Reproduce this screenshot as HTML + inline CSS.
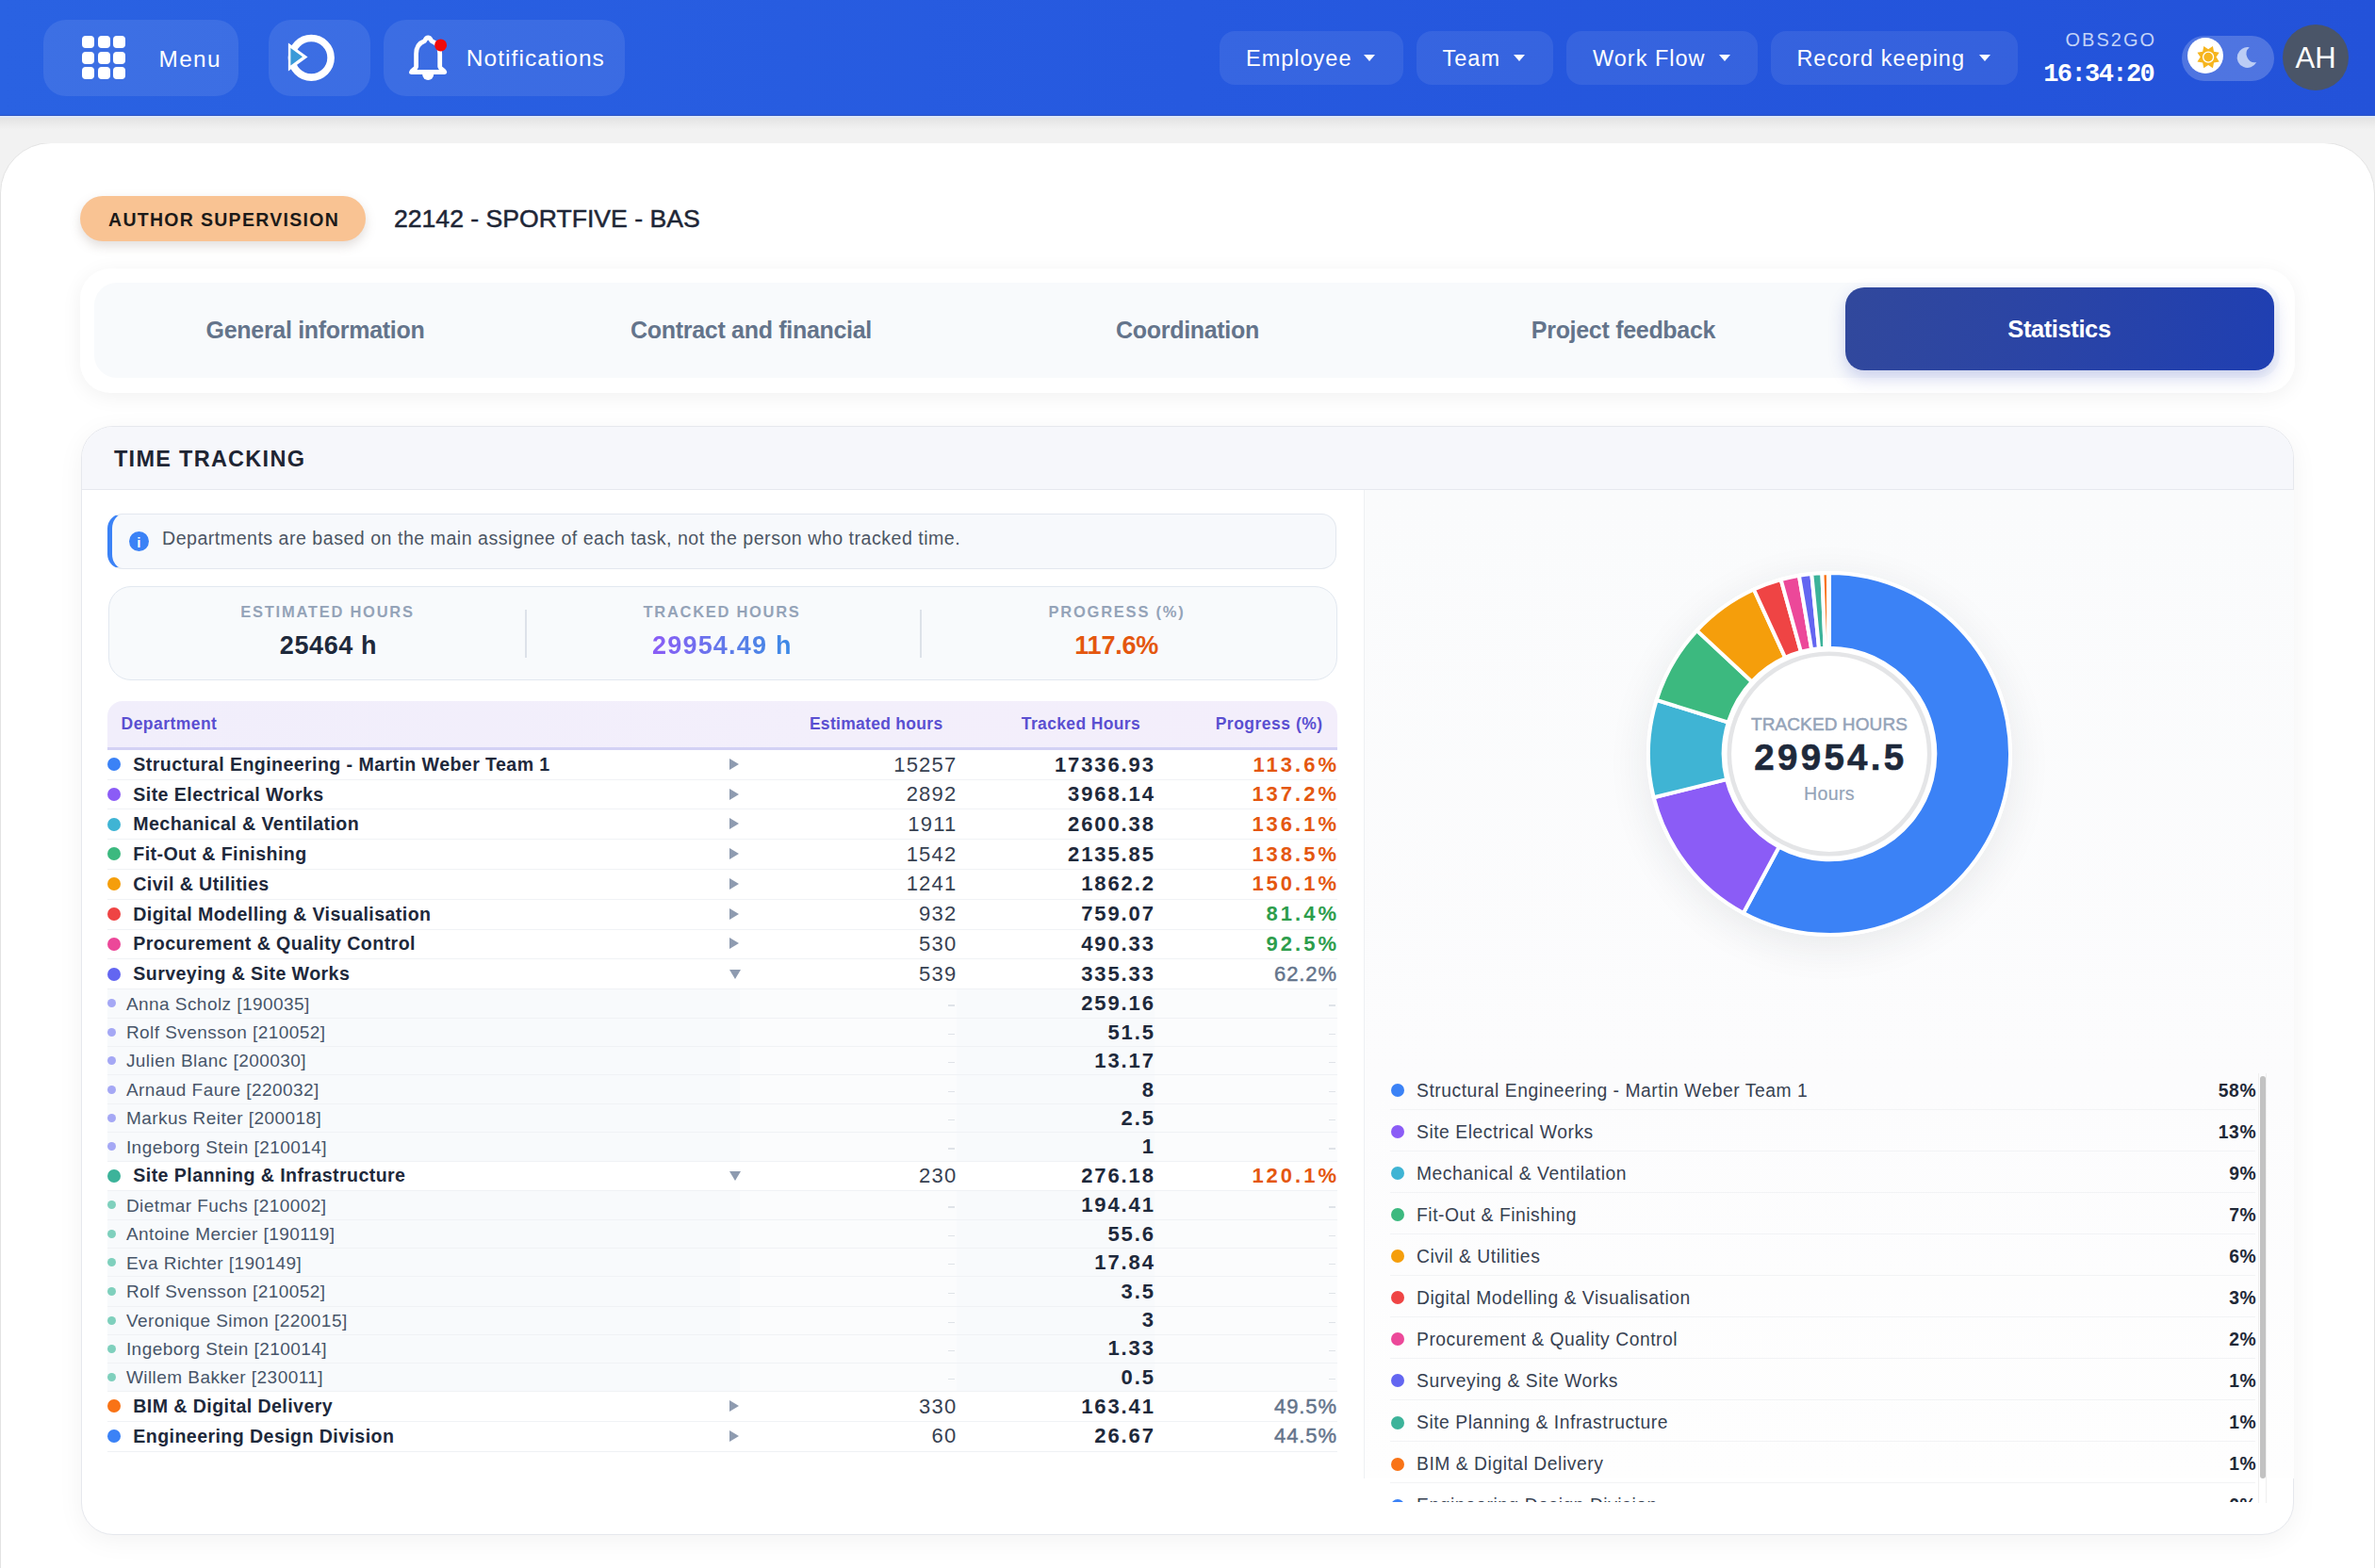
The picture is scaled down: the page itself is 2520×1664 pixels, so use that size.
<!DOCTYPE html><html><head><meta charset="utf-8"><style>
html,body{margin:0;padding:0;width:2520px;height:1664px;overflow:hidden;background:#f2f2f2;font-family:"Liberation Sans",sans-serif;}
.t{position:absolute;white-space:nowrap;}
</style></head><body>
<div style="position:absolute;left:0px;top:151px;width:2520px;height:1600px;background:#fff;border:1px solid #e3e3e3;border-radius:54px;box-sizing:border-box;"></div>
<div style="position:absolute;left:0px;top:124px;width:2520px;height:28px;background:linear-gradient(#e2e2e2,#ececec 30%,#f2f2f2 50%,#f2f2f2);"></div>
<div style="position:absolute;left:0px;top:0px;width:2520px;height:122.5px;background:linear-gradient(90deg,#2a62e2 0%,#2659df 50%,#2352d9 100%);"></div>
<div style="position:absolute;left:0px;top:121.5px;width:2520px;height:1px;background:#2a53c4;"></div>
<div style="position:absolute;left:0px;top:122.5px;width:2520px;height:2px;background:#dde7f8;"></div>
<div style="position:absolute;left:46px;top:21px;width:207px;height:81px;background:rgba(255,255,255,0.09);border-radius:24px;"></div>
<div style="position:absolute;left:285px;top:21px;width:108px;height:81px;background:rgba(255,255,255,0.09);border-radius:24px;"></div>
<div style="position:absolute;left:407px;top:21px;width:256px;height:81px;background:rgba(255,255,255,0.09);border-radius:24px;"></div>
<div style="position:absolute;left:87.0px;top:38.0px;width:13px;height:13px;background:#fff;border-radius:4px;"></div>
<div style="position:absolute;left:87.0px;top:54.6px;width:13px;height:13px;background:#fff;border-radius:4px;"></div>
<div style="position:absolute;left:87.0px;top:71.2px;width:13px;height:13px;background:#fff;border-radius:4px;"></div>
<div style="position:absolute;left:103.6px;top:38.0px;width:13px;height:13px;background:#fff;border-radius:4px;"></div>
<div style="position:absolute;left:103.6px;top:54.6px;width:13px;height:13px;background:#fff;border-radius:4px;"></div>
<div style="position:absolute;left:103.6px;top:71.2px;width:13px;height:13px;background:#fff;border-radius:4px;"></div>
<div style="position:absolute;left:120.2px;top:38.0px;width:13px;height:13px;background:#fff;border-radius:4px;"></div>
<div style="position:absolute;left:120.2px;top:54.6px;width:13px;height:13px;background:#fff;border-radius:4px;"></div>
<div style="position:absolute;left:120.2px;top:71.2px;width:13px;height:13px;background:#fff;border-radius:4px;"></div>
<div class="t" style="left:168.5px;top:50.53px;font-size:24.3px;line-height:24.3px;color:#fff;font-weight:400;letter-spacing:1.4px;font-family:'Liberation Sans', sans-serif;">Menu</div>
<svg style="position:absolute;left:290px;top:25px" width="80" height="75" viewBox="290 25 80 75">
<circle cx="330.3" cy="61.3" r="20.8" fill="none" stroke="#fff" stroke-width="7.6"/>
<path d="M305.9 45.5 L305.9 75.5 L326.5 60.5 Z" fill="#fff"/>
<path d="M308.4 51 L308.4 69.5 L321 60.3 Z" fill="#3a9ad8"/>
</svg>
<svg style="position:absolute;left:425px;top:30px" width="60" height="62" viewBox="425 30 60 62">
<path d="M454.2 40 C452 40 451.5 41.5 450.5 43.5 C445 45.5 441.6 50 441.6 57 L441.6 70.5 C441.6 73 437 74.5 436.5 76.5 L471.8 76.5 C471.4 74.5 466.7 73 466.7 70.5 L466.7 57 C466.7 50 463.4 45.5 457.9 43.5 C456.9 41.5 456.4 40 454.2 40 Z" fill="none" stroke="#fff" stroke-width="4.8" stroke-linejoin="round"/>
<path d="M448.2 79 A6 6 0 0 0 460.2 79 Z" fill="#fff"/>
<circle cx="467.6" cy="47.9" r="6.5" fill="#f00a0a"/>
</svg>
<div class="t" style="left:494.8px;top:50.26px;font-size:24.5px;line-height:24.5px;color:#fff;font-weight:400;letter-spacing:1.05px;font-family:'Liberation Sans', sans-serif;">Notifications</div>
<div style="position:absolute;left:1294.3px;top:33px;width:194.5px;height:56.5px;background:rgba(255,255,255,0.08);border-radius:16px;"></div>
<div class="t" style="left:1322.0px;top:50.61px;font-size:23.5px;line-height:23.5px;color:#fff;font-weight:400;letter-spacing:1.0px;font-family:'Liberation Sans', sans-serif;">Employee</div>
<div style="position:absolute;left:1447.2px;top:58px;width:0;height:0;border-left:6.8px solid transparent;border-right:6.8px solid transparent;border-top:7.2px solid #fff;"></div>
<div style="position:absolute;left:1503px;top:33px;width:144.70000000000005px;height:56.5px;background:rgba(255,255,255,0.08);border-radius:16px;"></div>
<div class="t" style="left:1530.5px;top:50.61px;font-size:23.5px;line-height:23.5px;color:#fff;font-weight:400;letter-spacing:1.0px;font-family:'Liberation Sans', sans-serif;">Team</div>
<div style="position:absolute;left:1606px;top:58px;width:0;height:0;border-left:6.8px solid transparent;border-right:6.8px solid transparent;border-top:7.2px solid #fff;"></div>
<div style="position:absolute;left:1662.2px;top:33px;width:202.5px;height:56.5px;background:rgba(255,255,255,0.08);border-radius:16px;"></div>
<div class="t" style="left:1690.0px;top:50.61px;font-size:23.5px;line-height:23.5px;color:#fff;font-weight:400;letter-spacing:1.0px;font-family:'Liberation Sans', sans-serif;">Work Flow</div>
<div style="position:absolute;left:1823.7px;top:58px;width:0;height:0;border-left:6.8px solid transparent;border-right:6.8px solid transparent;border-top:7.2px solid #fff;"></div>
<div style="position:absolute;left:1879px;top:33px;width:261.5px;height:56.5px;background:rgba(255,255,255,0.08);border-radius:16px;"></div>
<div class="t" style="left:1906.4px;top:50.61px;font-size:23.5px;line-height:23.5px;color:#fff;font-weight:400;letter-spacing:1.0px;font-family:'Liberation Sans', sans-serif;">Record keeping</div>
<div style="position:absolute;left:2099.5px;top:58px;width:0;height:0;border-left:6.8px solid transparent;border-right:6.8px solid transparent;border-top:7.2px solid #fff;"></div>
<div class="t" style="right:232px;top:32.07px;font-size:20px;line-height:20px;color:#c3d3f7;font-weight:400;letter-spacing:2.0px;font-family:'Liberation Sans', sans-serif;">OBS2GO</div>
<div class="t" style="right:236.5px;top:66.44px;font-size:27px;line-height:27px;color:#fff;font-weight:700;letter-spacing:-1.6px;font-family:'Liberation Mono', monospace;margin-right:-1.6px;">16:34:20</div>
<div style="position:absolute;left:2315px;top:37.5px;width:98px;height:48px;background:rgba(255,255,255,0.2);border-radius:24px;"></div>
<div style="position:absolute;left:2320.9px;top:40.4px;width:38px;height:38px;background:#fff;border-radius:50%;"></div>
<svg style="position:absolute;left:2320px;top:38px" width="90" height="46" viewBox="2320 38 90 46">
<polygon points="2347.92,48.96 2349.04,54.66 2354.74,55.78 2351.50,60.60 2354.74,65.42 2349.04,66.54 2347.92,72.24 2343.10,69.00 2338.28,72.24 2337.16,66.54 2331.46,65.42 2334.70,60.60 2331.46,55.78 2337.16,54.66 2338.28,48.96 2343.10,52.20" fill="#f6b51e"/>
<circle cx="2343.1" cy="60.6" r="5.5" fill="#f6b51e" stroke="#fff" stroke-width="1.3"/>
<path d="M2386.79 50.32 A10.9 10.9 0 1 0 2394.26 66.05 A9.0 9.0 0 0 1 2386.79 50.32 Z" fill="#bccdf5"/>
</svg>
<div style="position:absolute;left:2422px;top:26px;width:70px;height:70px;background:#4a5568;border-radius:50%;"></div>
<div class="t" style="left:1457px;width:2000px;text-align:center;top:46.26px;font-size:31px;line-height:31px;color:#fff;font-weight:400;letter-spacing:0px;font-family:'Liberation Sans', sans-serif;">AH</div>
<div style="position:absolute;left:85px;top:208px;width:303px;height:48px;background:#f9c393;border-radius:24px;box-shadow:0 5px 12px rgba(120,100,90,0.22);"></div>
<div class="t" style="left:115px;top:224.29px;font-size:19.5px;line-height:19.5px;color:#1c1a19;font-weight:700;letter-spacing:1.3px;font-family:'Liberation Sans', sans-serif;">AUTHOR SUPERVISION</div>
<div class="t" style="left:418px;top:218.78px;font-size:26.6px;line-height:26.6px;color:#1e2636;font-weight:400;letter-spacing:0px;font-family:'Liberation Sans', sans-serif;-webkit-text-stroke:0.5px #1e2636;">22142 - SPORTFIVE - BAS</div>
<div style="position:absolute;left:85px;top:285px;width:2350px;height:132px;background:#fff;border-radius:32px;box-shadow:0 4px 22px rgba(0,0,0,0.06);"></div>
<div style="position:absolute;left:100px;top:300px;width:2319px;height:101px;background:#f8fafc;border-radius:24px;"></div>
<div class="t" style="left:-665.5px;width:2000px;text-align:center;top:337.84px;font-size:25px;line-height:25px;color:#64748b;font-weight:700;letter-spacing:-0.3px;font-family:'Liberation Sans', sans-serif;">General information</div>
<div class="t" style="left:-203px;width:2000px;text-align:center;top:337.84px;font-size:25px;line-height:25px;color:#64748b;font-weight:700;letter-spacing:-0.3px;font-family:'Liberation Sans', sans-serif;">Contract and financial</div>
<div class="t" style="left:260px;width:2000px;text-align:center;top:337.84px;font-size:25px;line-height:25px;color:#64748b;font-weight:700;letter-spacing:-0.3px;font-family:'Liberation Sans', sans-serif;">Coordination</div>
<div class="t" style="left:722.5px;width:2000px;text-align:center;top:337.84px;font-size:25px;line-height:25px;color:#64748b;font-weight:700;letter-spacing:-0.3px;font-family:'Liberation Sans', sans-serif;">Project feedback</div>
<div style="position:absolute;left:1957.5px;top:305px;width:455.5px;height:88px;background:linear-gradient(100deg,#31489c 0%,#2a44a6 50%,#1f3fb2 100%);border-radius:20px;box-shadow:0 8px 18px rgba(40,60,180,0.22);"></div>
<div class="t" style="left:1185px;width:2000px;text-align:center;top:336.91px;font-size:25.5px;line-height:25.5px;color:#fff;font-weight:700;letter-spacing:-0.4px;font-family:'Liberation Sans', sans-serif;">Statistics</div>
<div style="position:absolute;left:86px;top:452px;width:2348px;height:1177px;background:#fff;border:1px solid #e6e8ed;border-radius:34px;box-sizing:border-box;box-shadow:0 6px 28px rgba(0,0,0,0.05);overflow:hidden;"></div>
<div style="position:absolute;left:87px;top:453px;width:2346px;height:66px;background:#f6f7fb;border-radius:33px 33px 0 0;border-bottom:1px solid #e6e8ee;"></div>
<div class="t" style="left:121px;top:475.51px;font-size:23.5px;line-height:23.5px;color:#1e2533;font-weight:700;letter-spacing:1.27px;font-family:'Liberation Sans', sans-serif;">TIME TRACKING</div>
<div style="position:absolute;left:1447px;top:520px;width:986px;height:1049px;background:linear-gradient(180deg,#fafbfc,#fcfcfd 60%,#fefefe);border-left:1px solid #eef0f3;"></div>
<div style="position:absolute;left:114px;top:544.5px;width:1304px;height:59px;background:#f7f9fc;border:1px solid #e3e8ef;border-left:5px solid #3b82f6;border-radius:16px;box-sizing:border-box;"></div>
<div style="position:absolute;left:136.5px;top:563.5px;width:21px;height:21px;background:#3b82f6;border-radius:50%;"></div>
<div class="t" style="left:-852.7px;width:2000px;text-align:center;top:567.80px;font-size:15px;line-height:15px;color:#fff;font-weight:700;letter-spacing:0px;font-family:'Liberation Sans', sans-serif;">i</div>
<div class="t" style="left:172px;top:562.41px;font-size:19.6px;line-height:19.6px;color:#4b5563;font-weight:400;letter-spacing:0.5px;font-family:'Liberation Sans', sans-serif;">Departments are based on the main assignee of each task, not the person who tracked time.</div>
<div style="position:absolute;left:114.5px;top:621.5px;width:1304.5px;height:100.5px;background:#f8fafc;border:1px solid #e2e8f0;border-radius:24px;box-sizing:border-box;"></div>
<div style="position:absolute;left:556.5px;top:646.5px;width:2px;height:51px;background:#dde2e9;"></div>
<div style="position:absolute;left:975.5px;top:646.5px;width:2px;height:51px;background:#dde2e9;"></div>
<div class="t" style="left:-652.5px;width:2000px;text-align:center;top:640.63px;font-size:16.5px;line-height:16.5px;color:#94a3b8;font-weight:700;letter-spacing:1.75px;font-family:'Liberation Sans', sans-serif;">ESTIMATED HOURS</div>
<div class="t" style="left:-234px;width:2000px;text-align:center;top:640.63px;font-size:16.5px;line-height:16.5px;color:#94a3b8;font-weight:700;letter-spacing:1.7px;font-family:'Liberation Sans', sans-serif;">TRACKED HOURS</div>
<div class="t" style="left:185px;width:2000px;text-align:center;top:640.63px;font-size:16.5px;line-height:16.5px;color:#94a3b8;font-weight:700;letter-spacing:1.75px;font-family:'Liberation Sans', sans-serif;">PROGRESS (%)</div>
<div class="t" style="left:-651.5px;width:2000px;text-align:center;top:672.44px;font-size:27px;line-height:27px;color:#1e293b;font-weight:700;letter-spacing:0.6px;font-family:'Liberation Sans', sans-serif;">25464 h</div>
<div class="t" style="left:-233px;width:2000px;text-align:center;top:672.44px;font-size:27px;line-height:27px;color:#6d6ae8;font-weight:700;letter-spacing:1.2px;font-family:'Liberation Sans', sans-serif;background:linear-gradient(90deg,#8b5cf6 0%,#5a7ee8 60%,#3b8ae6 100%);-webkit-background-clip:text;background-clip:text;color:transparent;width:auto;left:692px;text-align:left;">29954.49 h</div>
<div class="t" style="left:184.70000000000005px;width:2000px;text-align:center;top:672.44px;font-size:27px;line-height:27px;color:#e4570f;font-weight:700;letter-spacing:-0.2px;font-family:'Liberation Sans', sans-serif;">117.6%</div>
<div style="position:absolute;left:114px;top:744px;width:1304.5px;height:49px;background:linear-gradient(90deg,#f1eefb,#f3effb 60%,#f3eefb);border-radius:16px 16px 0 0;"></div>
<div style="position:absolute;left:114px;top:792.5px;width:1304.5px;height:3px;background:#d3d1f4;"></div>
<div class="t" style="left:128.6px;top:760.19px;font-size:17.5px;line-height:17.5px;color:#5a4fd1;font-weight:700;letter-spacing:0.45px;font-family:'Liberation Sans', sans-serif;">Department</div>
<div class="t" style="right:1519.5px;top:760.19px;font-size:17.5px;line-height:17.5px;color:#5a4fd1;font-weight:700;letter-spacing:0.3px;font-family:'Liberation Sans', sans-serif;">Estimated hours</div>
<div class="t" style="right:1310px;top:760.19px;font-size:17.5px;line-height:17.5px;color:#5a4fd1;font-weight:700;letter-spacing:0.35px;font-family:'Liberation Sans', sans-serif;">Tracked Hours</div>
<div class="t" style="right:1116.4px;top:760.19px;font-size:17.5px;line-height:17.5px;color:#5a4fd1;font-weight:700;letter-spacing:0.5px;font-family:'Liberation Sans', sans-serif;">Progress (%)</div>
<div style="position:absolute;left:114px;top:1049px;width:671px;height:31px;background:#f8fafc;"></div>
<div style="position:absolute;left:785px;top:1049px;width:230px;height:31px;background:#fbfcfd;"></div>
<div style="position:absolute;left:1015px;top:1049px;width:210px;height:31px;background:#f8fafc;"></div>
<div style="position:absolute;left:1225px;top:1049px;width:193.5px;height:31px;background:#fbfcfd;"></div>
<div style="position:absolute;left:114px;top:1080px;width:671px;height:30px;background:#f8fafc;"></div>
<div style="position:absolute;left:785px;top:1080px;width:230px;height:30px;background:#fbfcfd;"></div>
<div style="position:absolute;left:1015px;top:1080px;width:210px;height:30px;background:#f8fafc;"></div>
<div style="position:absolute;left:1225px;top:1080px;width:193.5px;height:30px;background:#fbfcfd;"></div>
<div style="position:absolute;left:114px;top:1110px;width:671px;height:31px;background:#f8fafc;"></div>
<div style="position:absolute;left:785px;top:1110px;width:230px;height:31px;background:#fbfcfd;"></div>
<div style="position:absolute;left:1015px;top:1110px;width:210px;height:31px;background:#f8fafc;"></div>
<div style="position:absolute;left:1225px;top:1110px;width:193.5px;height:31px;background:#fbfcfd;"></div>
<div style="position:absolute;left:114px;top:1141px;width:671px;height:31px;background:#f8fafc;"></div>
<div style="position:absolute;left:785px;top:1141px;width:230px;height:31px;background:#fbfcfd;"></div>
<div style="position:absolute;left:1015px;top:1141px;width:210px;height:31px;background:#f8fafc;"></div>
<div style="position:absolute;left:1225px;top:1141px;width:193.5px;height:31px;background:#fbfcfd;"></div>
<div style="position:absolute;left:114px;top:1172px;width:671px;height:29px;background:#f8fafc;"></div>
<div style="position:absolute;left:785px;top:1172px;width:230px;height:29px;background:#fbfcfd;"></div>
<div style="position:absolute;left:1015px;top:1172px;width:210px;height:29px;background:#f8fafc;"></div>
<div style="position:absolute;left:1225px;top:1172px;width:193.5px;height:29px;background:#fbfcfd;"></div>
<div style="position:absolute;left:114px;top:1201px;width:671px;height:31px;background:#f8fafc;"></div>
<div style="position:absolute;left:785px;top:1201px;width:230px;height:31px;background:#fbfcfd;"></div>
<div style="position:absolute;left:1015px;top:1201px;width:210px;height:31px;background:#f8fafc;"></div>
<div style="position:absolute;left:1225px;top:1201px;width:193.5px;height:31px;background:#fbfcfd;"></div>
<div style="position:absolute;left:114px;top:1263px;width:671px;height:31px;background:#f8fafc;"></div>
<div style="position:absolute;left:785px;top:1263px;width:230px;height:31px;background:#fbfcfd;"></div>
<div style="position:absolute;left:1015px;top:1263px;width:210px;height:31px;background:#f8fafc;"></div>
<div style="position:absolute;left:1225px;top:1263px;width:193.5px;height:31px;background:#fbfcfd;"></div>
<div style="position:absolute;left:114px;top:1294px;width:671px;height:31px;background:#f8fafc;"></div>
<div style="position:absolute;left:785px;top:1294px;width:230px;height:31px;background:#fbfcfd;"></div>
<div style="position:absolute;left:1015px;top:1294px;width:210px;height:31px;background:#f8fafc;"></div>
<div style="position:absolute;left:1225px;top:1294px;width:193.5px;height:31px;background:#fbfcfd;"></div>
<div style="position:absolute;left:114px;top:1325px;width:671px;height:30px;background:#f8fafc;"></div>
<div style="position:absolute;left:785px;top:1325px;width:230px;height:30px;background:#fbfcfd;"></div>
<div style="position:absolute;left:1015px;top:1325px;width:210px;height:30px;background:#f8fafc;"></div>
<div style="position:absolute;left:1225px;top:1325px;width:193.5px;height:30px;background:#fbfcfd;"></div>
<div style="position:absolute;left:114px;top:1355px;width:671px;height:31px;background:#f8fafc;"></div>
<div style="position:absolute;left:785px;top:1355px;width:230px;height:31px;background:#fbfcfd;"></div>
<div style="position:absolute;left:1015px;top:1355px;width:210px;height:31px;background:#f8fafc;"></div>
<div style="position:absolute;left:1225px;top:1355px;width:193.5px;height:31px;background:#fbfcfd;"></div>
<div style="position:absolute;left:114px;top:1386px;width:671px;height:30px;background:#f8fafc;"></div>
<div style="position:absolute;left:785px;top:1386px;width:230px;height:30px;background:#fbfcfd;"></div>
<div style="position:absolute;left:1015px;top:1386px;width:210px;height:30px;background:#f8fafc;"></div>
<div style="position:absolute;left:1225px;top:1386px;width:193.5px;height:30px;background:#fbfcfd;"></div>
<div style="position:absolute;left:114px;top:1416px;width:671px;height:30px;background:#f8fafc;"></div>
<div style="position:absolute;left:785px;top:1416px;width:230px;height:30px;background:#fbfcfd;"></div>
<div style="position:absolute;left:1015px;top:1416px;width:210px;height:30px;background:#f8fafc;"></div>
<div style="position:absolute;left:1225px;top:1416px;width:193.5px;height:30px;background:#fbfcfd;"></div>
<div style="position:absolute;left:114px;top:1446px;width:671px;height:31px;background:#f8fafc;"></div>
<div style="position:absolute;left:785px;top:1446px;width:230px;height:31px;background:#fbfcfd;"></div>
<div style="position:absolute;left:1015px;top:1446px;width:210px;height:31px;background:#f8fafc;"></div>
<div style="position:absolute;left:1225px;top:1446px;width:193.5px;height:31px;background:#fbfcfd;"></div>
<div style="position:absolute;left:114px;top:827px;width:1304.5px;height:1px;background:#f0f2f5;"></div>
<div style="position:absolute;left:114px;top:858px;width:1304.5px;height:1px;background:#f0f2f5;"></div>
<div style="position:absolute;left:114px;top:890px;width:1304.5px;height:1px;background:#f0f2f5;"></div>
<div style="position:absolute;left:114px;top:922px;width:1304.5px;height:1px;background:#f0f2f5;"></div>
<div style="position:absolute;left:114px;top:954px;width:1304.5px;height:1px;background:#f0f2f5;"></div>
<div style="position:absolute;left:114px;top:986px;width:1304.5px;height:1px;background:#f0f2f5;"></div>
<div style="position:absolute;left:114px;top:1017px;width:1304.5px;height:1px;background:#f0f2f5;"></div>
<div style="position:absolute;left:114px;top:1049px;width:1304.5px;height:1px;background:#f0f2f5;"></div>
<div style="position:absolute;left:114px;top:1080px;width:1304.5px;height:1px;background:#f0f2f5;"></div>
<div style="position:absolute;left:114px;top:1110px;width:1304.5px;height:1px;background:#f0f2f5;"></div>
<div style="position:absolute;left:114px;top:1140px;width:1304.5px;height:1px;background:#f0f2f5;"></div>
<div style="position:absolute;left:114px;top:1171px;width:1304.5px;height:1px;background:#f0f2f5;"></div>
<div style="position:absolute;left:114px;top:1201px;width:1304.5px;height:1px;background:#f0f2f5;"></div>
<div style="position:absolute;left:114px;top:1232px;width:1304.5px;height:1px;background:#f0f2f5;"></div>
<div style="position:absolute;left:114px;top:1263px;width:1304.5px;height:1px;background:#f0f2f5;"></div>
<div style="position:absolute;left:114px;top:1294px;width:1304.5px;height:1px;background:#f0f2f5;"></div>
<div style="position:absolute;left:114px;top:1324px;width:1304.5px;height:1px;background:#f0f2f5;"></div>
<div style="position:absolute;left:114px;top:1354px;width:1304.5px;height:1px;background:#f0f2f5;"></div>
<div style="position:absolute;left:114px;top:1386px;width:1304.5px;height:1px;background:#f0f2f5;"></div>
<div style="position:absolute;left:114px;top:1416px;width:1304.5px;height:1px;background:#f0f2f5;"></div>
<div style="position:absolute;left:114px;top:1446px;width:1304.5px;height:1px;background:#f0f2f5;"></div>
<div style="position:absolute;left:114px;top:1476px;width:1304.5px;height:1px;background:#f0f2f5;"></div>
<div style="position:absolute;left:114px;top:1508px;width:1304.5px;height:1px;background:#f0f2f5;"></div>
<div style="position:absolute;left:114px;top:1540px;width:1304.5px;height:1px;background:#eff1f4;border-radius:0 0 0 0;"></div>
<div style="position:absolute;left:114px;top:804.4px;width:14px;height:14px;background:#3b82f6;border-radius:50%;"></div>
<div class="t" style="left:141.3px;top:801.91px;font-size:19.6px;line-height:19.6px;color:#1e293b;font-weight:700;letter-spacing:0.42px;font-family:'Liberation Sans', sans-serif;">Structural Engineering - Martin Weber Team 1</div>
<div style="position:absolute;left:774px;top:804.90px;width:0;height:0;border-top:6.5px solid transparent;border-bottom:6.5px solid transparent;border-left:10.5px solid #8e9bb0;"></div>
<div class="t" style="right:1505.8px;top:800.68px;font-size:22px;line-height:22px;color:#374151;font-weight:400;letter-spacing:1.2px;font-family:'Liberation Sans', sans-serif;margin-right:-1.2px;">15257</div>
<div class="t" style="right:1296px;top:800.68px;font-size:22px;line-height:22px;color:#1e293b;font-weight:700;letter-spacing:1.9px;font-family:'Liberation Sans', sans-serif;margin-right:-1.9px;">17336.93</div>
<div class="t" style="right:1102px;top:800.68px;font-size:22px;line-height:22px;color:#e4570f;font-weight:700;letter-spacing:3.0px;font-family:'Liberation Sans', sans-serif;margin-right:-3.0px;">113.6%</div>
<div style="position:absolute;left:114px;top:836.05px;width:14px;height:14px;background:#8b5cf6;border-radius:50%;"></div>
<div class="t" style="left:141.3px;top:833.56px;font-size:19.6px;line-height:19.6px;color:#1e293b;font-weight:700;letter-spacing:0.42px;font-family:'Liberation Sans', sans-serif;">Site Electrical Works</div>
<div style="position:absolute;left:774px;top:836.55px;width:0;height:0;border-top:6.5px solid transparent;border-bottom:6.5px solid transparent;border-left:10.5px solid #8e9bb0;"></div>
<div class="t" style="right:1505.8px;top:832.33px;font-size:22px;line-height:22px;color:#374151;font-weight:400;letter-spacing:1.2px;font-family:'Liberation Sans', sans-serif;margin-right:-1.2px;">2892</div>
<div class="t" style="right:1296px;top:832.33px;font-size:22px;line-height:22px;color:#1e293b;font-weight:700;letter-spacing:1.9px;font-family:'Liberation Sans', sans-serif;margin-right:-1.9px;">3968.14</div>
<div class="t" style="right:1102px;top:832.33px;font-size:22px;line-height:22px;color:#e4570f;font-weight:700;letter-spacing:3.0px;font-family:'Liberation Sans', sans-serif;margin-right:-3.0px;">137.2%</div>
<div style="position:absolute;left:114px;top:867.5999999999999px;width:14px;height:14px;background:#3fb4d4;border-radius:50%;"></div>
<div class="t" style="left:141.3px;top:865.11px;font-size:19.6px;line-height:19.6px;color:#1e293b;font-weight:700;letter-spacing:0.42px;font-family:'Liberation Sans', sans-serif;">Mechanical & Ventilation</div>
<div style="position:absolute;left:774px;top:868.10px;width:0;height:0;border-top:6.5px solid transparent;border-bottom:6.5px solid transparent;border-left:10.5px solid #8e9bb0;"></div>
<div class="t" style="right:1505.8px;top:863.88px;font-size:22px;line-height:22px;color:#374151;font-weight:400;letter-spacing:1.2px;font-family:'Liberation Sans', sans-serif;margin-right:-1.2px;">1911</div>
<div class="t" style="right:1296px;top:863.88px;font-size:22px;line-height:22px;color:#1e293b;font-weight:700;letter-spacing:1.9px;font-family:'Liberation Sans', sans-serif;margin-right:-1.9px;">2600.38</div>
<div class="t" style="right:1102px;top:863.88px;font-size:22px;line-height:22px;color:#e4570f;font-weight:700;letter-spacing:3.0px;font-family:'Liberation Sans', sans-serif;margin-right:-3.0px;">136.1%</div>
<div style="position:absolute;left:114px;top:899.25px;width:14px;height:14px;background:#3cb97f;border-radius:50%;"></div>
<div class="t" style="left:141.3px;top:896.76px;font-size:19.6px;line-height:19.6px;color:#1e293b;font-weight:700;letter-spacing:0.42px;font-family:'Liberation Sans', sans-serif;">Fit-Out & Finishing</div>
<div style="position:absolute;left:774px;top:899.75px;width:0;height:0;border-top:6.5px solid transparent;border-bottom:6.5px solid transparent;border-left:10.5px solid #8e9bb0;"></div>
<div class="t" style="right:1505.8px;top:895.53px;font-size:22px;line-height:22px;color:#374151;font-weight:400;letter-spacing:1.2px;font-family:'Liberation Sans', sans-serif;margin-right:-1.2px;">1542</div>
<div class="t" style="right:1296px;top:895.53px;font-size:22px;line-height:22px;color:#1e293b;font-weight:700;letter-spacing:1.9px;font-family:'Liberation Sans', sans-serif;margin-right:-1.9px;">2135.85</div>
<div class="t" style="right:1102px;top:895.53px;font-size:22px;line-height:22px;color:#e4570f;font-weight:700;letter-spacing:3.0px;font-family:'Liberation Sans', sans-serif;margin-right:-3.0px;">138.5%</div>
<div style="position:absolute;left:114px;top:931.1px;width:14px;height:14px;background:#f59e0b;border-radius:50%;"></div>
<div class="t" style="left:141.3px;top:928.61px;font-size:19.6px;line-height:19.6px;color:#1e293b;font-weight:700;letter-spacing:0.42px;font-family:'Liberation Sans', sans-serif;">Civil & Utilities</div>
<div style="position:absolute;left:774px;top:931.60px;width:0;height:0;border-top:6.5px solid transparent;border-bottom:6.5px solid transparent;border-left:10.5px solid #8e9bb0;"></div>
<div class="t" style="right:1505.8px;top:927.38px;font-size:22px;line-height:22px;color:#374151;font-weight:400;letter-spacing:1.2px;font-family:'Liberation Sans', sans-serif;margin-right:-1.2px;">1241</div>
<div class="t" style="right:1296px;top:927.38px;font-size:22px;line-height:22px;color:#1e293b;font-weight:700;letter-spacing:1.9px;font-family:'Liberation Sans', sans-serif;margin-right:-1.9px;">1862.2</div>
<div class="t" style="right:1102px;top:927.38px;font-size:22px;line-height:22px;color:#e4570f;font-weight:700;letter-spacing:3.0px;font-family:'Liberation Sans', sans-serif;margin-right:-3.0px;">150.1%</div>
<div style="position:absolute;left:114px;top:963.1px;width:14px;height:14px;background:#ef4444;border-radius:50%;"></div>
<div class="t" style="left:141.3px;top:960.61px;font-size:19.6px;line-height:19.6px;color:#1e293b;font-weight:700;letter-spacing:0.42px;font-family:'Liberation Sans', sans-serif;">Digital Modelling & Visualisation</div>
<div style="position:absolute;left:774px;top:963.60px;width:0;height:0;border-top:6.5px solid transparent;border-bottom:6.5px solid transparent;border-left:10.5px solid #8e9bb0;"></div>
<div class="t" style="right:1505.8px;top:959.38px;font-size:22px;line-height:22px;color:#374151;font-weight:400;letter-spacing:1.2px;font-family:'Liberation Sans', sans-serif;margin-right:-1.2px;">932</div>
<div class="t" style="right:1296px;top:959.38px;font-size:22px;line-height:22px;color:#1e293b;font-weight:700;letter-spacing:1.9px;font-family:'Liberation Sans', sans-serif;margin-right:-1.9px;">759.07</div>
<div class="t" style="right:1102px;top:959.38px;font-size:22px;line-height:22px;color:#2d9d4c;font-weight:700;letter-spacing:3.0px;font-family:'Liberation Sans', sans-serif;margin-right:-3.0px;">81.4%</div>
<div style="position:absolute;left:114px;top:994.95px;width:14px;height:14px;background:#ec4899;border-radius:50%;"></div>
<div class="t" style="left:141.3px;top:992.46px;font-size:19.6px;line-height:19.6px;color:#1e293b;font-weight:700;letter-spacing:0.42px;font-family:'Liberation Sans', sans-serif;">Procurement & Quality Control</div>
<div style="position:absolute;left:774px;top:995.45px;width:0;height:0;border-top:6.5px solid transparent;border-bottom:6.5px solid transparent;border-left:10.5px solid #8e9bb0;"></div>
<div class="t" style="right:1505.8px;top:991.23px;font-size:22px;line-height:22px;color:#374151;font-weight:400;letter-spacing:1.2px;font-family:'Liberation Sans', sans-serif;margin-right:-1.2px;">530</div>
<div class="t" style="right:1296px;top:991.23px;font-size:22px;line-height:22px;color:#1e293b;font-weight:700;letter-spacing:1.9px;font-family:'Liberation Sans', sans-serif;margin-right:-1.9px;">490.33</div>
<div class="t" style="right:1102px;top:991.23px;font-size:22px;line-height:22px;color:#2d9d4c;font-weight:700;letter-spacing:3.0px;font-family:'Liberation Sans', sans-serif;margin-right:-3.0px;">92.5%</div>
<div style="position:absolute;left:114px;top:1026.55px;width:14px;height:14px;background:#6366f1;border-radius:50%;"></div>
<div class="t" style="left:141.3px;top:1024.06px;font-size:19.6px;line-height:19.6px;color:#1e293b;font-weight:700;letter-spacing:0.42px;font-family:'Liberation Sans', sans-serif;">Surveying & Site Works</div>
<div style="position:absolute;left:774px;top:1029.05px;width:0;height:0;border-left:6.2px solid transparent;border-right:6.2px solid transparent;border-top:10px solid #8e9bb0;"></div>
<div class="t" style="right:1505.8px;top:1022.83px;font-size:22px;line-height:22px;color:#374151;font-weight:400;letter-spacing:1.2px;font-family:'Liberation Sans', sans-serif;margin-right:-1.2px;">539</div>
<div class="t" style="right:1296px;top:1022.83px;font-size:22px;line-height:22px;color:#1e293b;font-weight:700;letter-spacing:1.9px;font-family:'Liberation Sans', sans-serif;margin-right:-1.9px;">335.33</div>
<div class="t" style="right:1102px;top:1022.83px;font-size:22px;line-height:22px;color:#64748b;font-weight:400;letter-spacing:0.9px;font-family:'Liberation Sans', sans-serif;margin-right:-0.9px;-webkit-text-stroke:0.45px #64748b;">62.2%</div>
<div style="position:absolute;left:114px;top:1060.4px;width:9px;height:9px;background:#a5a8f5;border-radius:50%;"></div>
<div class="t" style="left:133.9px;top:1055.62px;font-size:19px;line-height:19px;color:#475569;font-weight:400;letter-spacing:0.45px;font-family:'Liberation Sans', sans-serif;">Anna Scholz [190035]</div>
<div style="position:absolute;left:1006px;top:1066.4px;width:7px;height:1.2px;background:#dfe3e8;"></div>
<div style="position:absolute;left:1410px;top:1066.4px;width:7px;height:1.2px;background:#dfe3e8;"></div>
<div class="t" style="right:1296px;top:1054.18px;font-size:22px;line-height:22px;color:#1e293b;font-weight:700;letter-spacing:1.9px;font-family:'Liberation Sans', sans-serif;margin-right:-1.9px;">259.16</div>
<div style="position:absolute;left:114px;top:1091.0px;width:9px;height:9px;background:#a5a8f5;border-radius:50%;"></div>
<div class="t" style="left:133.9px;top:1086.22px;font-size:19px;line-height:19px;color:#475569;font-weight:400;letter-spacing:0.45px;font-family:'Liberation Sans', sans-serif;">Rolf Svensson [210052]</div>
<div style="position:absolute;left:1006px;top:1097.0px;width:7px;height:1.2px;background:#dfe3e8;"></div>
<div style="position:absolute;left:1410px;top:1097.0px;width:7px;height:1.2px;background:#dfe3e8;"></div>
<div class="t" style="right:1296px;top:1084.78px;font-size:22px;line-height:22px;color:#1e293b;font-weight:700;letter-spacing:1.9px;font-family:'Liberation Sans', sans-serif;margin-right:-1.9px;">51.5</div>
<div style="position:absolute;left:114px;top:1121.25px;width:9px;height:9px;background:#a5a8f5;border-radius:50%;"></div>
<div class="t" style="left:133.9px;top:1116.47px;font-size:19px;line-height:19px;color:#475569;font-weight:400;letter-spacing:0.45px;font-family:'Liberation Sans', sans-serif;">Julien Blanc [200030]</div>
<div style="position:absolute;left:1006px;top:1127.25px;width:7px;height:1.2px;background:#dfe3e8;"></div>
<div style="position:absolute;left:1410px;top:1127.25px;width:7px;height:1.2px;background:#dfe3e8;"></div>
<div class="t" style="right:1296px;top:1115.03px;font-size:22px;line-height:22px;color:#1e293b;font-weight:700;letter-spacing:1.9px;font-family:'Liberation Sans', sans-serif;margin-right:-1.9px;">13.17</div>
<div style="position:absolute;left:114px;top:1151.75px;width:9px;height:9px;background:#a5a8f5;border-radius:50%;"></div>
<div class="t" style="left:133.9px;top:1146.97px;font-size:19px;line-height:19px;color:#475569;font-weight:400;letter-spacing:0.45px;font-family:'Liberation Sans', sans-serif;">Arnaud Faure [220032]</div>
<div style="position:absolute;left:1006px;top:1157.75px;width:7px;height:1.2px;background:#dfe3e8;"></div>
<div style="position:absolute;left:1410px;top:1157.75px;width:7px;height:1.2px;background:#dfe3e8;"></div>
<div class="t" style="right:1296px;top:1145.53px;font-size:22px;line-height:22px;color:#1e293b;font-weight:700;letter-spacing:1.9px;font-family:'Liberation Sans', sans-serif;margin-right:-1.9px;">8</div>
<div style="position:absolute;left:114px;top:1181.95px;width:9px;height:9px;background:#a5a8f5;border-radius:50%;"></div>
<div class="t" style="left:133.9px;top:1177.17px;font-size:19px;line-height:19px;color:#475569;font-weight:400;letter-spacing:0.45px;font-family:'Liberation Sans', sans-serif;">Markus Reiter [200018]</div>
<div style="position:absolute;left:1006px;top:1187.95px;width:7px;height:1.2px;background:#dfe3e8;"></div>
<div style="position:absolute;left:1410px;top:1187.95px;width:7px;height:1.2px;background:#dfe3e8;"></div>
<div class="t" style="right:1296px;top:1175.73px;font-size:22px;line-height:22px;color:#1e293b;font-weight:700;letter-spacing:1.9px;font-family:'Liberation Sans', sans-serif;margin-right:-1.9px;">2.5</div>
<div style="position:absolute;left:114px;top:1212.45px;width:9px;height:9px;background:#a5a8f5;border-radius:50%;"></div>
<div class="t" style="left:133.9px;top:1207.67px;font-size:19px;line-height:19px;color:#475569;font-weight:400;letter-spacing:0.45px;font-family:'Liberation Sans', sans-serif;">Ingeborg Stein [210014]</div>
<div style="position:absolute;left:1006px;top:1218.45px;width:7px;height:1.2px;background:#dfe3e8;"></div>
<div style="position:absolute;left:1410px;top:1218.45px;width:7px;height:1.2px;background:#dfe3e8;"></div>
<div class="t" style="right:1296px;top:1206.23px;font-size:22px;line-height:22px;color:#1e293b;font-weight:700;letter-spacing:1.9px;font-family:'Liberation Sans', sans-serif;margin-right:-1.9px;">1</div>
<div style="position:absolute;left:114px;top:1240.9px;width:14px;height:14px;background:#3cb39a;border-radius:50%;"></div>
<div class="t" style="left:141.3px;top:1238.41px;font-size:19.6px;line-height:19.6px;color:#1e293b;font-weight:700;letter-spacing:0.42px;font-family:'Liberation Sans', sans-serif;">Site Planning & Infrastructure</div>
<div style="position:absolute;left:774px;top:1243.40px;width:0;height:0;border-left:6.2px solid transparent;border-right:6.2px solid transparent;border-top:10px solid #8e9bb0;"></div>
<div class="t" style="right:1505.8px;top:1237.18px;font-size:22px;line-height:22px;color:#374151;font-weight:400;letter-spacing:1.2px;font-family:'Liberation Sans', sans-serif;margin-right:-1.2px;">230</div>
<div class="t" style="right:1296px;top:1237.18px;font-size:22px;line-height:22px;color:#1e293b;font-weight:700;letter-spacing:1.9px;font-family:'Liberation Sans', sans-serif;margin-right:-1.9px;">276.18</div>
<div class="t" style="right:1102px;top:1237.18px;font-size:22px;line-height:22px;color:#e4570f;font-weight:700;letter-spacing:3.0px;font-family:'Liberation Sans', sans-serif;margin-right:-3.0px;">120.1%</div>
<div style="position:absolute;left:114px;top:1274.4px;width:9px;height:9px;background:#7fd0bd;border-radius:50%;"></div>
<div class="t" style="left:133.9px;top:1269.62px;font-size:19px;line-height:19px;color:#475569;font-weight:400;letter-spacing:0.45px;font-family:'Liberation Sans', sans-serif;">Dietmar Fuchs [210002]</div>
<div style="position:absolute;left:1006px;top:1280.4px;width:7px;height:1.2px;background:#dfe3e8;"></div>
<div style="position:absolute;left:1410px;top:1280.4px;width:7px;height:1.2px;background:#dfe3e8;"></div>
<div class="t" style="right:1296px;top:1268.18px;font-size:22px;line-height:22px;color:#1e293b;font-weight:700;letter-spacing:1.9px;font-family:'Liberation Sans', sans-serif;margin-right:-1.9px;">194.41</div>
<div style="position:absolute;left:114px;top:1305.05px;width:9px;height:9px;background:#7fd0bd;border-radius:50%;"></div>
<div class="t" style="left:133.9px;top:1300.27px;font-size:19px;line-height:19px;color:#475569;font-weight:400;letter-spacing:0.45px;font-family:'Liberation Sans', sans-serif;">Antoine Mercier [190119]</div>
<div style="position:absolute;left:1006px;top:1311.05px;width:7px;height:1.2px;background:#dfe3e8;"></div>
<div style="position:absolute;left:1410px;top:1311.05px;width:7px;height:1.2px;background:#dfe3e8;"></div>
<div class="t" style="right:1296px;top:1298.83px;font-size:22px;line-height:22px;color:#1e293b;font-weight:700;letter-spacing:1.9px;font-family:'Liberation Sans', sans-serif;margin-right:-1.9px;">55.6</div>
<div style="position:absolute;left:114px;top:1335.3px;width:9px;height:9px;background:#7fd0bd;border-radius:50%;"></div>
<div class="t" style="left:133.9px;top:1330.52px;font-size:19px;line-height:19px;color:#475569;font-weight:400;letter-spacing:0.45px;font-family:'Liberation Sans', sans-serif;">Eva Richter [190149]</div>
<div style="position:absolute;left:1006px;top:1341.3px;width:7px;height:1.2px;background:#dfe3e8;"></div>
<div style="position:absolute;left:1410px;top:1341.3px;width:7px;height:1.2px;background:#dfe3e8;"></div>
<div class="t" style="right:1296px;top:1329.08px;font-size:22px;line-height:22px;color:#1e293b;font-weight:700;letter-spacing:1.9px;font-family:'Liberation Sans', sans-serif;margin-right:-1.9px;">17.84</div>
<div style="position:absolute;left:114px;top:1366.0px;width:9px;height:9px;background:#7fd0bd;border-radius:50%;"></div>
<div class="t" style="left:133.9px;top:1361.22px;font-size:19px;line-height:19px;color:#475569;font-weight:400;letter-spacing:0.45px;font-family:'Liberation Sans', sans-serif;">Rolf Svensson [210052]</div>
<div style="position:absolute;left:1006px;top:1372.0px;width:7px;height:1.2px;background:#dfe3e8;"></div>
<div style="position:absolute;left:1410px;top:1372.0px;width:7px;height:1.2px;background:#dfe3e8;"></div>
<div class="t" style="right:1296px;top:1359.78px;font-size:22px;line-height:22px;color:#1e293b;font-weight:700;letter-spacing:1.9px;font-family:'Liberation Sans', sans-serif;margin-right:-1.9px;">3.5</div>
<div style="position:absolute;left:114px;top:1396.5px;width:9px;height:9px;background:#7fd0bd;border-radius:50%;"></div>
<div class="t" style="left:133.9px;top:1391.72px;font-size:19px;line-height:19px;color:#475569;font-weight:400;letter-spacing:0.45px;font-family:'Liberation Sans', sans-serif;">Veronique Simon [220015]</div>
<div style="position:absolute;left:1006px;top:1402.5px;width:7px;height:1.2px;background:#dfe3e8;"></div>
<div style="position:absolute;left:1410px;top:1402.5px;width:7px;height:1.2px;background:#dfe3e8;"></div>
<div class="t" style="right:1296px;top:1390.28px;font-size:22px;line-height:22px;color:#1e293b;font-weight:700;letter-spacing:1.9px;font-family:'Liberation Sans', sans-serif;margin-right:-1.9px;">3</div>
<div style="position:absolute;left:114px;top:1426.65px;width:9px;height:9px;background:#7fd0bd;border-radius:50%;"></div>
<div class="t" style="left:133.9px;top:1421.87px;font-size:19px;line-height:19px;color:#475569;font-weight:400;letter-spacing:0.45px;font-family:'Liberation Sans', sans-serif;">Ingeborg Stein [210014]</div>
<div style="position:absolute;left:1006px;top:1432.65px;width:7px;height:1.2px;background:#dfe3e8;"></div>
<div style="position:absolute;left:1410px;top:1432.65px;width:7px;height:1.2px;background:#dfe3e8;"></div>
<div class="t" style="right:1296px;top:1420.43px;font-size:22px;line-height:22px;color:#1e293b;font-weight:700;letter-spacing:1.9px;font-family:'Liberation Sans', sans-serif;margin-right:-1.9px;">1.33</div>
<div style="position:absolute;left:114px;top:1457.0px;width:9px;height:9px;background:#7fd0bd;border-radius:50%;"></div>
<div class="t" style="left:133.9px;top:1452.22px;font-size:19px;line-height:19px;color:#475569;font-weight:400;letter-spacing:0.45px;font-family:'Liberation Sans', sans-serif;">Willem Bakker [230011]</div>
<div style="position:absolute;left:1006px;top:1463.0px;width:7px;height:1.2px;background:#dfe3e8;"></div>
<div style="position:absolute;left:1410px;top:1463.0px;width:7px;height:1.2px;background:#dfe3e8;"></div>
<div class="t" style="right:1296px;top:1450.78px;font-size:22px;line-height:22px;color:#1e293b;font-weight:700;letter-spacing:1.9px;font-family:'Liberation Sans', sans-serif;margin-right:-1.9px;">0.5</div>
<div style="position:absolute;left:114px;top:1485.45px;width:14px;height:14px;background:#f97316;border-radius:50%;"></div>
<div class="t" style="left:141.3px;top:1482.96px;font-size:19.6px;line-height:19.6px;color:#1e293b;font-weight:700;letter-spacing:0.42px;font-family:'Liberation Sans', sans-serif;">BIM & Digital Delivery</div>
<div style="position:absolute;left:774px;top:1485.95px;width:0;height:0;border-top:6.5px solid transparent;border-bottom:6.5px solid transparent;border-left:10.5px solid #8e9bb0;"></div>
<div class="t" style="right:1505.8px;top:1481.73px;font-size:22px;line-height:22px;color:#374151;font-weight:400;letter-spacing:1.2px;font-family:'Liberation Sans', sans-serif;margin-right:-1.2px;">330</div>
<div class="t" style="right:1296px;top:1481.73px;font-size:22px;line-height:22px;color:#1e293b;font-weight:700;letter-spacing:1.9px;font-family:'Liberation Sans', sans-serif;margin-right:-1.9px;">163.41</div>
<div class="t" style="right:1102px;top:1481.73px;font-size:22px;line-height:22px;color:#64748b;font-weight:400;letter-spacing:0.9px;font-family:'Liberation Sans', sans-serif;margin-right:-0.9px;-webkit-text-stroke:0.45px #64748b;">49.5%</div>
<div style="position:absolute;left:114px;top:1517.1px;width:14px;height:14px;background:#3b82f6;border-radius:50%;"></div>
<div class="t" style="left:141.3px;top:1514.61px;font-size:19.6px;line-height:19.6px;color:#1e293b;font-weight:700;letter-spacing:0.42px;font-family:'Liberation Sans', sans-serif;">Engineering Design Division</div>
<div style="position:absolute;left:774px;top:1517.60px;width:0;height:0;border-top:6.5px solid transparent;border-bottom:6.5px solid transparent;border-left:10.5px solid #8e9bb0;"></div>
<div class="t" style="right:1505.8px;top:1513.38px;font-size:22px;line-height:22px;color:#374151;font-weight:400;letter-spacing:1.2px;font-family:'Liberation Sans', sans-serif;margin-right:-1.2px;">60</div>
<div class="t" style="right:1296px;top:1513.38px;font-size:22px;line-height:22px;color:#1e293b;font-weight:700;letter-spacing:1.9px;font-family:'Liberation Sans', sans-serif;margin-right:-1.9px;">26.67</div>
<div class="t" style="right:1102px;top:1513.38px;font-size:22px;line-height:22px;color:#64748b;font-weight:400;letter-spacing:0.9px;font-family:'Liberation Sans', sans-serif;margin-right:-0.9px;-webkit-text-stroke:0.45px #64748b;">44.5%</div>
<div style="position:absolute;left:1747px;top:606px;width:388px;height:388px;background:#fff;border-radius:50%;box-shadow:0 10px 44px rgba(30,40,60,0.09);"></div>
<svg style="position:absolute;left:1741px;top:600px" width="400" height="400" viewBox="-200 -200 400 400"><path d="M0.000 -192.000 A192 192 0 1 1 -91.200 168.957 L-53.342 98.823 A112.3 112.3 0 1 0 0.000 -112.300 Z" fill="#3b82f6" stroke="#fff" stroke-width="4" stroke-linejoin="miter"/><path d="M-91.200 168.957 A192 192 0 0 1 -186.337 46.289 L-108.988 27.074 A112.3 112.3 0 0 0 -53.342 98.823 Z" fill="#8b5cf6" stroke="#fff" stroke-width="4" stroke-linejoin="miter"/><path d="M-186.337 46.289 A192 192 0 0 1 -183.313 -57.100 L-107.219 -33.398 A112.3 112.3 0 0 0 -108.988 27.074 Z" fill="#3fb4d4" stroke="#fff" stroke-width="4" stroke-linejoin="miter"/><path d="M-183.313 -57.100 A192 192 0 0 1 -140.488 -130.871 L-82.171 -76.546 A112.3 112.3 0 0 0 -107.219 -33.398 Z" fill="#3cb97f" stroke="#fff" stroke-width="4" stroke-linejoin="miter"/><path d="M-140.488 -130.871 A192 192 0 0 1 -80.076 -174.505 L-46.836 -102.067 A112.3 112.3 0 0 0 -82.171 -76.546 Z" fill="#f59e0b" stroke="#fff" stroke-width="4" stroke-linejoin="miter"/><path d="M-80.076 -174.505 A192 192 0 0 1 -51.396 -184.993 L-30.061 -108.202 A112.3 112.3 0 0 0 -46.836 -102.067 Z" fill="#ef4444" stroke="#fff" stroke-width="4" stroke-linejoin="miter"/><path d="M-51.396 -184.993 A192 192 0 0 1 -32.131 -189.292 L-18.793 -110.716 A112.3 112.3 0 0 0 -30.061 -108.202 Z" fill="#ec4899" stroke="#fff" stroke-width="4" stroke-linejoin="miter"/><path d="M-32.131 -189.292 A192 192 0 0 1 -18.748 -191.082 L-10.966 -111.763 A112.3 112.3 0 0 0 -18.793 -110.716 Z" fill="#6366f1" stroke="#fff" stroke-width="4" stroke-linejoin="miter"/><path d="M-18.748 -191.082 A192 192 0 0 1 -7.653 -191.847 L-4.476 -112.211 A112.3 112.3 0 0 0 -10.966 -111.763 Z" fill="#3cb39a" stroke="#fff" stroke-width="4" stroke-linejoin="miter"/><path d="M-7.653 -191.847 A192 192 0 0 1 -1.074 -191.997 L-0.628 -112.298 A112.3 112.3 0 0 0 -4.476 -112.211 Z" fill="#f97316" stroke="#fff" stroke-width="4" stroke-linejoin="miter"/><path d="M-1.074 -191.997 A192 192 0 0 1 -0.000 -192.000 L-0.000 -112.300 A112.3 112.3 0 0 0 -0.628 -112.298 Z" fill="#3b82f6" stroke="#fff" stroke-width="4" stroke-linejoin="miter"/><circle cx="0" cy="0" r="106.2" fill="#fff" stroke="#e4e5e7" stroke-width="4.6"/></svg>
<div class="t" style="left:941px;width:2000px;text-align:center;top:758.92px;font-size:19px;line-height:19px;color:#94a3b8;font-weight:400;letter-spacing:0.1px;font-family:'Liberation Sans', sans-serif;-webkit-text-stroke:0.5px #94a3b8;">TRACKED HOURS</div>
<div class="t" style="left:942.4000000000001px;width:2000px;text-align:center;top:784.81px;font-size:38.5px;line-height:38.5px;color:#1e293b;font-weight:700;letter-spacing:3.3px;font-family:'Liberation Sans', sans-serif;-webkit-text-stroke:0.6px #1e293b;">29954.5</div>
<div class="t" style="left:941px;width:2000px;text-align:center;top:833.21px;font-size:19.6px;line-height:19.6px;color:#94a3b8;font-weight:400;letter-spacing:0.3px;font-family:'Liberation Sans', sans-serif;-webkit-text-stroke:0.2px #94a3b8;">Hours</div>
<div style="position:absolute;left:1450px;top:1120px;width:980px;height:474px;overflow:hidden;">
<div style="position:absolute;left:26px;top:30.00px;width:14px;height:14px;border-radius:50%;background:#3b82f6"></div>
<div class="t" style="left:53px;top:27.66px;font-size:19.3px;line-height:19.3px;color:#374151;font-weight:400;letter-spacing:0.54px;">Structural Engineering - Martin Weber Team 1</div>
<div class="t" style="right:36.40000000000009px;top:27.66px;font-size:19.3px;line-height:19.3px;color:#1f2937;font-weight:700;letter-spacing:0.6px;margin-right:-0.6px;">58%</div>
<div style="position:absolute;left:25px;top:56.50px;width:918px;height:1px;background:#f2f3f5"></div>
<div style="position:absolute;left:26px;top:74.07px;width:14px;height:14px;border-radius:50%;background:#8b5cf6"></div>
<div class="t" style="left:53px;top:71.73px;font-size:19.3px;line-height:19.3px;color:#374151;font-weight:400;letter-spacing:0.54px;">Site Electrical Works</div>
<div class="t" style="right:36.40000000000009px;top:71.73px;font-size:19.3px;line-height:19.3px;color:#1f2937;font-weight:700;letter-spacing:0.6px;margin-right:-0.6px;">13%</div>
<div style="position:absolute;left:25px;top:100.57px;width:918px;height:1px;background:#f2f3f5"></div>
<div style="position:absolute;left:26px;top:118.14px;width:14px;height:14px;border-radius:50%;background:#3fb4d4"></div>
<div class="t" style="left:53px;top:115.80px;font-size:19.3px;line-height:19.3px;color:#374151;font-weight:400;letter-spacing:0.54px;">Mechanical & Ventilation</div>
<div class="t" style="right:36.40000000000009px;top:115.80px;font-size:19.3px;line-height:19.3px;color:#1f2937;font-weight:700;letter-spacing:0.6px;margin-right:-0.6px;">9%</div>
<div style="position:absolute;left:25px;top:144.64px;width:918px;height:1px;background:#f2f3f5"></div>
<div style="position:absolute;left:26px;top:162.21px;width:14px;height:14px;border-radius:50%;background:#3cb97f"></div>
<div class="t" style="left:53px;top:159.87px;font-size:19.3px;line-height:19.3px;color:#374151;font-weight:400;letter-spacing:0.54px;">Fit-Out & Finishing</div>
<div class="t" style="right:36.40000000000009px;top:159.87px;font-size:19.3px;line-height:19.3px;color:#1f2937;font-weight:700;letter-spacing:0.6px;margin-right:-0.6px;">7%</div>
<div style="position:absolute;left:25px;top:188.71px;width:918px;height:1px;background:#f2f3f5"></div>
<div style="position:absolute;left:26px;top:206.28px;width:14px;height:14px;border-radius:50%;background:#f59e0b"></div>
<div class="t" style="left:53px;top:203.94px;font-size:19.3px;line-height:19.3px;color:#374151;font-weight:400;letter-spacing:0.54px;">Civil & Utilities</div>
<div class="t" style="right:36.40000000000009px;top:203.94px;font-size:19.3px;line-height:19.3px;color:#1f2937;font-weight:700;letter-spacing:0.6px;margin-right:-0.6px;">6%</div>
<div style="position:absolute;left:25px;top:232.78px;width:918px;height:1px;background:#f2f3f5"></div>
<div style="position:absolute;left:26px;top:250.35px;width:14px;height:14px;border-radius:50%;background:#ef4444"></div>
<div class="t" style="left:53px;top:248.01px;font-size:19.3px;line-height:19.3px;color:#374151;font-weight:400;letter-spacing:0.54px;">Digital Modelling & Visualisation</div>
<div class="t" style="right:36.40000000000009px;top:248.01px;font-size:19.3px;line-height:19.3px;color:#1f2937;font-weight:700;letter-spacing:0.6px;margin-right:-0.6px;">3%</div>
<div style="position:absolute;left:25px;top:276.85px;width:918px;height:1px;background:#f2f3f5"></div>
<div style="position:absolute;left:26px;top:294.42px;width:14px;height:14px;border-radius:50%;background:#ec4899"></div>
<div class="t" style="left:53px;top:292.08px;font-size:19.3px;line-height:19.3px;color:#374151;font-weight:400;letter-spacing:0.54px;">Procurement & Quality Control</div>
<div class="t" style="right:36.40000000000009px;top:292.08px;font-size:19.3px;line-height:19.3px;color:#1f2937;font-weight:700;letter-spacing:0.6px;margin-right:-0.6px;">2%</div>
<div style="position:absolute;left:25px;top:320.92px;width:918px;height:1px;background:#f2f3f5"></div>
<div style="position:absolute;left:26px;top:338.49px;width:14px;height:14px;border-radius:50%;background:#6366f1"></div>
<div class="t" style="left:53px;top:336.15px;font-size:19.3px;line-height:19.3px;color:#374151;font-weight:400;letter-spacing:0.54px;">Surveying & Site Works</div>
<div class="t" style="right:36.40000000000009px;top:336.15px;font-size:19.3px;line-height:19.3px;color:#1f2937;font-weight:700;letter-spacing:0.6px;margin-right:-0.6px;">1%</div>
<div style="position:absolute;left:25px;top:364.99px;width:918px;height:1px;background:#f2f3f5"></div>
<div style="position:absolute;left:26px;top:382.56px;width:14px;height:14px;border-radius:50%;background:#3cb39a"></div>
<div class="t" style="left:53px;top:380.22px;font-size:19.3px;line-height:19.3px;color:#374151;font-weight:400;letter-spacing:0.54px;">Site Planning & Infrastructure</div>
<div class="t" style="right:36.40000000000009px;top:380.22px;font-size:19.3px;line-height:19.3px;color:#1f2937;font-weight:700;letter-spacing:0.6px;margin-right:-0.6px;">1%</div>
<div style="position:absolute;left:25px;top:409.06px;width:918px;height:1px;background:#f2f3f5"></div>
<div style="position:absolute;left:26px;top:426.63px;width:14px;height:14px;border-radius:50%;background:#f97316"></div>
<div class="t" style="left:53px;top:424.29px;font-size:19.3px;line-height:19.3px;color:#374151;font-weight:400;letter-spacing:0.54px;">BIM & Digital Delivery</div>
<div class="t" style="right:36.40000000000009px;top:424.29px;font-size:19.3px;line-height:19.3px;color:#1f2937;font-weight:700;letter-spacing:0.6px;margin-right:-0.6px;">1%</div>
<div style="position:absolute;left:25px;top:453.13px;width:918px;height:1px;background:#f2f3f5"></div>
<div style="position:absolute;left:26px;top:470.70px;width:14px;height:14px;border-radius:50%;background:#3b82f6"></div>
<div class="t" style="left:53px;top:468.36px;font-size:19.3px;line-height:19.3px;color:#374151;font-weight:400;letter-spacing:0.54px;">Engineering Design Division</div>
<div class="t" style="right:36.40000000000009px;top:468.36px;font-size:19.3px;line-height:19.3px;color:#1f2937;font-weight:700;letter-spacing:0.6px;margin-right:-0.6px;">0%</div>
<div style="position:absolute;left:25px;top:497.20px;width:918px;height:1px;background:#f2f3f5"></div>
</div>
<div style="position:absolute;left:2395.5px;top:1138.5px;width:9.5px;height:456px;border-left:1px solid #efefef;border-right:1px solid #efefef;box-sizing:border-box;"></div>
<div style="position:absolute;left:2398.2px;top:1142px;width:6px;height:427px;background:#c2c2c2;border-radius:3px;"></div>
</body></html>
